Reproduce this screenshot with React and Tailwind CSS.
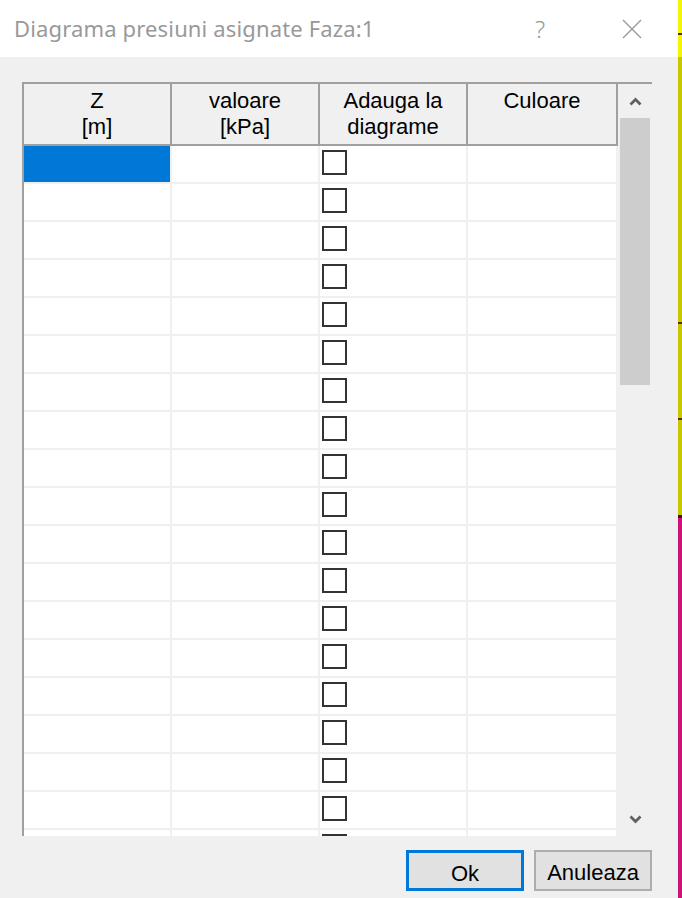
const ROWS = 19;

const headers = [
  ["Z", "[m]"],
  ["valoare", "[kPa]"],
  ["Adauga la", "diagrame"],
  ["Culoare"],
];

const ChevronUp = () => (
  <svg width="13" height="9" viewBox="0 0 13 9">
    <path d="M1.5 7.5 L6.5 2.5 L11.5 7.5" stroke="#606060" strokeWidth="2.8" fill="none" />
  </svg>
);

const ChevronDown = () => (
  <svg width="13" height="9" viewBox="0 0 13 9">
    <path d="M1.5 1.5 L6.5 6.5 L11.5 1.5" stroke="#606060" strokeWidth="2.8" fill="none" />
  </svg>
);

const App = () => {
  return (
    <div
      className="flex w-[682px] h-[898px] overflow-hidden"
      style={{ fontFamily: '"Noto Sans", "Open Sans", sans-serif' }}
    >
      <div className="flex flex-col w-[678px] h-full bg-[#f0f0f0]">
        {/* title bar */}
        <div className="flex items-center h-[57px] bg-white shrink-0">
          <div className="pl-[14px] text-[22px] text-[#999999] tracking-[0.15px]">
            Diagrama presiuni asignate Faza:1
          </div>
          <div className="ml-auto w-[20px] text-center text-[24px] text-[#999999] font-light mr-[72px]">
            ?
          </div>
          <svg width="20" height="20" viewBox="0 0 20 20" className="mr-[36px]">
            <path d="M1 1 L19 19 M19 1 L1 19" stroke="#999999" strokeWidth="1.4" />
          </svg>
        </div>

        {/* grid */}
        <div
          className="ml-[22px] mt-[25px] w-[630px] h-[754px] flex border-t-2 border-l-2 border-[#a0a0a0] bg-white overflow-hidden"
          style={{ fontFamily: '"Liberation Sans", Arial, sans-serif' }}
        >
          <div className="flex flex-col w-[594px]">
            <div className="flex h-[62px] shrink-0 bg-[#f0f0f0] border-b-2 border-[#a0a0a0]">
              {headers.map((h, i) => (
                <div
                  key={i}
                  className={`${i === 3 ? "w-[150px]" : "w-[148px]"} border-r-2 border-[#a0a0a0] text-center text-[22px] leading-[26px] text-black pt-[4px]`}
                >
                  {h.map((line) => (
                    <div key={line}>{line}</div>
                  ))}
                </div>
              ))}
            </div>
            {Array.from({ length: ROWS }).map((_, r) => (
              <div key={r} className="flex h-[38px] shrink-0 border-b-2 border-[#f0f0f0]">
                <div
                  className={`w-[148px] border-r-2 border-[#f0f0f0] ${r === 0 ? "bg-[#0078d7]" : "bg-white"}`}
                ></div>
                <div className="w-[148px] border-r-2 border-[#f0f0f0]"></div>
                <div className="w-[148px] border-r-2 border-[#f0f0f0] pl-[2px] pt-[4px]">
                  <div className="w-[25px] h-[25px] border-2 border-[#333333] bg-white"></div>
                </div>
                <div className="w-[150px] border-r-2 border-[#f0f0f0]"></div>
              </div>
            ))}
          </div>
          {/* scrollbar */}
          <div className="flex flex-col w-[34px] bg-[#f0f0f0] pl-[2px] pr-[2px]">
            <div className="h-[34px] flex items-center justify-center shrink-0">
              <ChevronUp />
            </div>
            <div className="h-[267px] bg-[#cdcdcd] shrink-0"></div>
            <div className="flex-1"></div>
            <div className="h-[34px] flex items-center justify-center shrink-0">
              <ChevronDown />
            </div>
          </div>
        </div>

        {/* buttons */}
        <div
          className="flex justify-end gap-[10px] pr-[26px] mt-[14px]"
          style={{ fontFamily: '"Liberation Sans", Arial, sans-serif' }}
        >
          <button className="w-[118px] h-[41px] bg-[#e1e1e1] border-[3px] border-[#0078d7] text-[22px] text-black pt-[4px]">
            Ok
          </button>
          <button className="w-[118px] h-[41px] bg-[#e1e1e1] border-2 border-[#adadad] text-[22px] text-black pt-[4px]">
            Anuleaza
          </button>
        </div>
      </div>

      {/* background app strip */}
      <div className="flex flex-col w-[4px] h-full">
        <div className="h-[33px] bg-[#f5f500]"></div>
        <div className="h-[2px] bg-[#5a2a10]"></div>
        <div className="h-[22px] bg-[#f5f500]"></div>
        <div className="h-[265px] bg-[#c8c800]"></div>
        <div className="h-[2px] bg-[#5a2a10]"></div>
        <div className="h-[94px] bg-[#c8c800]"></div>
        <div className="h-[2px] bg-[#5a2a10]"></div>
        <div className="h-[95px] bg-[#c8c800]"></div>
        <div className="h-[3px] bg-[#4a1020]"></div>
        <div className="flex-1 bg-[#cc1177]"></div>
      </div>
    </div>
  );
};

export default App;
